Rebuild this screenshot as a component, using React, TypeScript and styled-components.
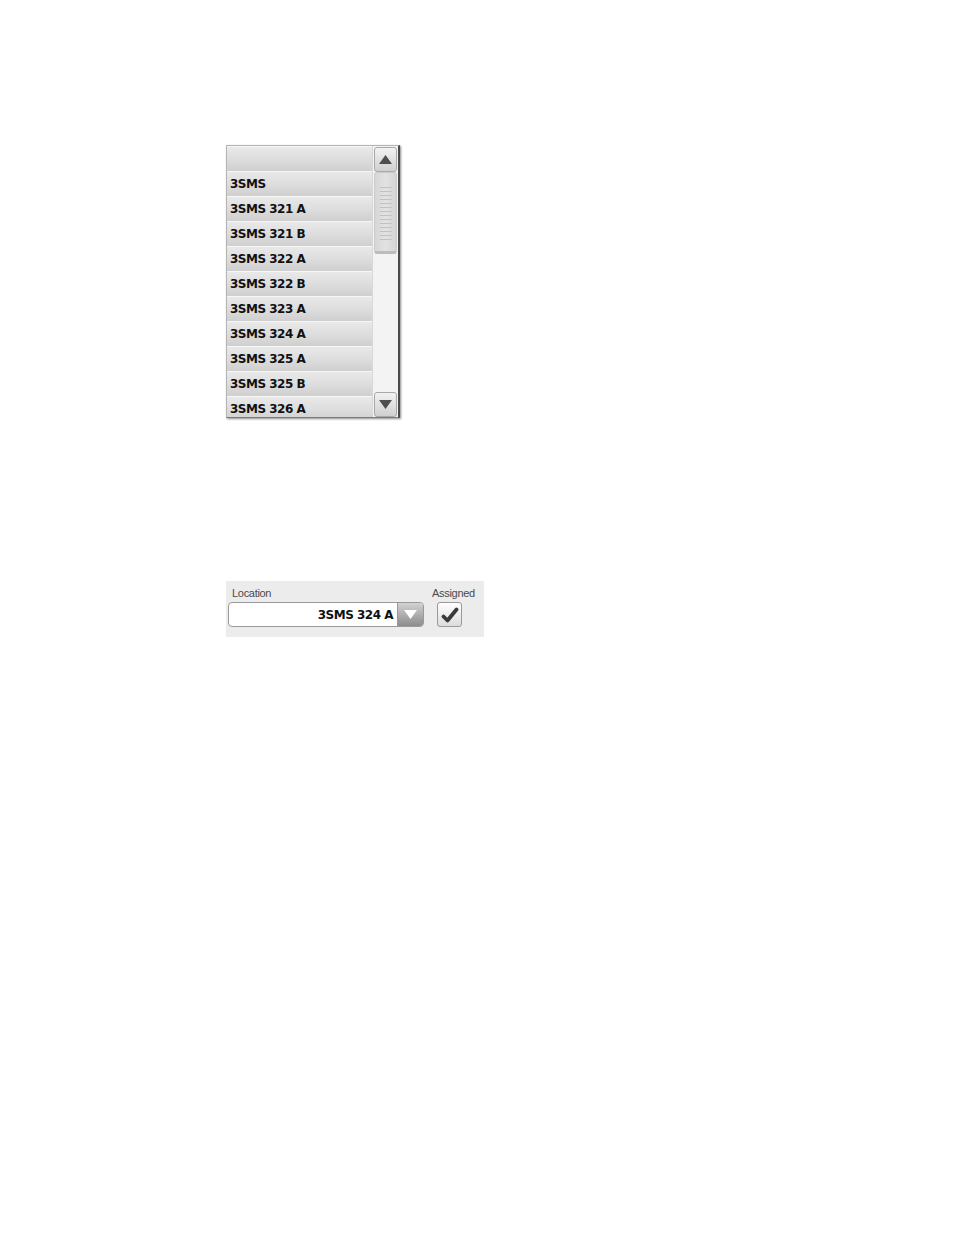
import React from 'react';
import { styled, createGlobalStyle } from 'styled-components';

const GlobalStyle = createGlobalStyle`
  html, body {
    margin: 0;
    padding: 0;
    background: #ffffff;
  }
`;

const Page = styled.div`
  display: flex;
  flex-direction: column;
  align-items: flex-start;
  padding: 145px 0 0 226px;
  gap: 163px;
`;

const ListBox = styled.div`
  display: flex;
  width: 171px;
  height: 271px;
  border: 1px solid #b4b4b4;
  border-right: 2px solid #4a4a4a;
  border-bottom: 1px solid #7a7a7a;
  box-shadow: 1px 1px 2px rgba(0, 0, 0, 0.45);
  background: #f4f4f4;
  overflow: hidden;
`;

const Items = styled.div`
  display: flex;
  flex-direction: column;
  width: 145px;
`;

const Row = styled.div`
  flex: 0 0 25px;
  box-sizing: border-box;
  display: flex;
  align-items: center;
  padding-left: 3px;
  border-top: 1px solid #f6f6f6;
  background: linear-gradient(#e9e9e9, #dcdcdc 55%, #cfcfcf);
  font-family: 'DejaVu Sans', Verdana, sans-serif;
  font-weight: bold;
  font-size: 12px;
  letter-spacing: -0.5px;
  color: #111;
  white-space: nowrap;
`;

const ScrollBar = styled.div`
  display: flex;
  flex-direction: column;
  width: 25px;
  padding-top: 1px;
  background: #f3f3f3;
  border-left: 1px solid #d8d8d8;
`;

const ArrowButton = styled.div`
  flex: 0 0 23px;
  display: flex;
  align-items: center;
  justify-content: center;
  margin: 0 1px;
  border: 1px solid #a8a8a8;
  border-radius: 3px;
  background: linear-gradient(#f2f2f2, #d0d0d0);
`;

const Track = styled.div`
  flex: 1;
  display: flex;
  flex-direction: column;
`;

const Thumb = styled.div`
  height: 82px;
  margin: 0 1px;
  box-sizing: border-box;
  border-radius: 3px;
  border: 1px solid #cccccc;
  border-bottom: 3px solid #bcbcbc;
  background: linear-gradient(90deg, #d6d6d6, #e2e2e2 50%, #d4d4d4);
  display: flex;
  flex-direction: column;
  align-items: center;
  padding-top: 14px;
  gap: 3px;
`;

const Grip = styled.div`
  width: 12px;
  height: 1px;
  background: #c2c2c2;
`;

const Panel = styled.div`
  width: 256px;
  height: 56px;
  padding: 0 0 0 2px;
  background: #ececec;
  display: flex;
  gap: 8px;
  font-family: 'Liberation Sans', Arial, sans-serif;
`;

const Field = styled.div`
  display: flex;
  flex-direction: column;
  align-items: flex-start;
`;

const Label = styled.div<{ $indent?: number }>`
  font-size: 11px;
  letter-spacing: -0.3px;
  color: #4a4a4a;
  height: 14px;
  margin-top: 5px;
  margin-left: ${(p) => p.$indent ?? 0}px;
  line-height: 14px;
`;

const Combo = styled.div`
  margin-top: 2px;
  width: 196px;
  height: 25px;
  box-sizing: border-box;
  display: flex;
  border: 1px solid #9a9a9a;
  border-radius: 4px;
  background: #ffffff;
  overflow: hidden;
`;

const ComboText = styled.div`
  flex: 1;
  display: flex;
  align-items: center;
  justify-content: flex-end;
  padding-right: 4px;
  font-family: 'DejaVu Sans', Verdana, sans-serif;
  font-weight: bold;
  font-size: 12px;
  letter-spacing: -0.5px;
  color: #111;
`;

const ComboButton = styled.div`
  width: 25px;
  display: flex;
  align-items: center;
  justify-content: center;
  border-left: 1px solid #9a9a9a;
  background: linear-gradient(#d2d2d2, #8c8c8c);
`;

const CheckBox = styled.div`
  margin: 2px 0 0 5px;
  width: 25px;
  height: 25px;
  box-sizing: border-box;
  display: flex;
  align-items: center;
  justify-content: center;
  border: 1px solid #9a9a9a;
  border-radius: 3px;
  background: linear-gradient(#ffffff, #dcdcdc);
`;

const rows = [
  '',
  '3SMS',
  '3SMS 321 A',
  '3SMS 321 B',
  '3SMS 322 A',
  '3SMS 322 B',
  '3SMS 323 A',
  '3SMS 324 A',
  '3SMS 325 A',
  '3SMS 325 B',
  '3SMS 326 A',
];

const Triangle = ({ up, color }: { up?: boolean; color: string }) => (
  <svg width="13" height="9" viewBox="0 0 13 9">
    <path d={up ? 'M6.5 0 L13 9 L0 9 Z' : 'M0 0 L13 0 L6.5 9 Z'} fill={color} />
  </svg>
);

const App = () => (
  <>
    <GlobalStyle />
    <Page>
      <ListBox>
        <Items>
          {rows.map((r, i) => (
            <Row key={i}>{r}</Row>
          ))}
        </Items>
        <ScrollBar>
          <ArrowButton>
            <Triangle up color="#4e4e4e" />
          </ArrowButton>
          <Track>
            <Thumb>
              {Array.from({ length: 14 }).map((_, i) => (
                <Grip key={i} />
              ))}
            </Thumb>
          </Track>
          <ArrowButton>
            <Triangle color="#4e4e4e" />
          </ArrowButton>
        </ScrollBar>
      </ListBox>
      <Panel>
        <Field>
          <Label $indent={4}>Location</Label>
          <Combo>
            <ComboText>3SMS 324 A</ComboText>
            <ComboButton>
              <Triangle color="#ffffff" />
            </ComboButton>
          </Combo>
        </Field>
        <Field>
          <Label>Assigned</Label>
          <CheckBox>
            <svg width="18" height="16" viewBox="0 0 18 16">
              <path
                d="M2.5 9.5 L6.5 13.5 L15.5 2.5"
                fill="none"
                stroke="#3a3a3a"
                strokeWidth="3.8"
                strokeLinecap="round"
                strokeLinejoin="round"
              />
            </svg>
          </CheckBox>
        </Field>
      </Panel>
    </Page>
  </>
);

export default App;
